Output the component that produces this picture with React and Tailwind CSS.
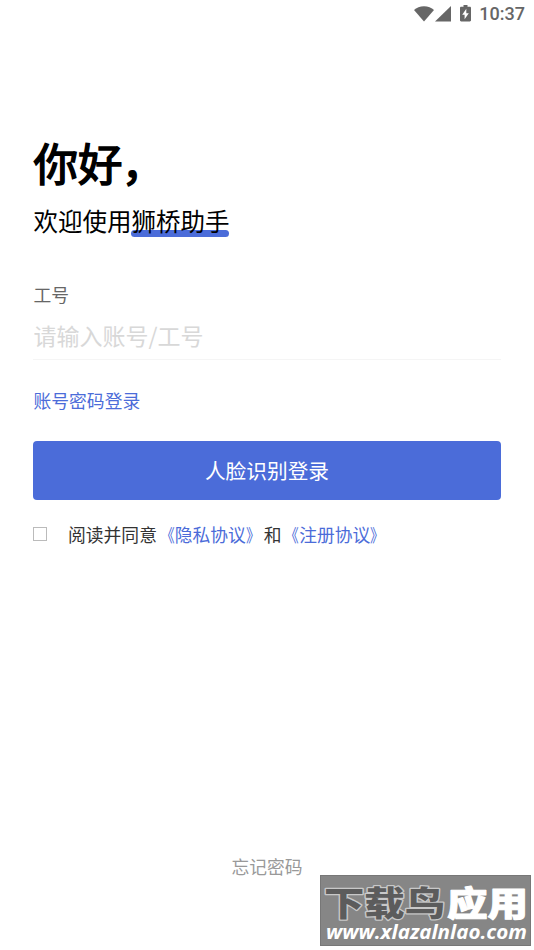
import React, { useState } from 'react';

const StatusBar = () => (
  <div className="flex h-[27px] items-center justify-end pr-[9px] text-[#666]">
    <svg className="mr-px" width="20" height="16" viewBox="0 0 20 16" fill="currentColor">
      <path d="M10 15.500 0 4.100C2.500 1.700 6 .3 10 .3s7.500 1.400 10 3.800z" />
    </svg>
    <svg className="mr-[9px]" width="16" height="16" viewBox="0 0 16 16" fill="currentColor">
      <path d="M16 0v15.500H0z" />
    </svg>
    <svg className="mr-2" width="11" height="17" viewBox="0 0 11 17">
      <path
        fill="currentColor"
        d="M3.500 0h4v1.800h2.300c.7 0 1.200.5 1.200 1.200v12.300c0 .7-.5 1.200-1.200 1.200H1.200C.5 16.500 0 16 0 15.300V3c0-.7.5-1.200 1.200-1.200h2.300z"
      />
      <path fill="#fff" d="M6.300 3.800 2.200 9.700h2.400v4.500L8.800 8.200H6.300z" />
    </svg>
    <span className="font-['Roboto',sans-serif] text-[18px] leading-none font-medium">10:37</span>
  </div>
);

const Agreement = ({ name }) => (
  <span className="flex text-[#4b6cd9]">
    <span className="origin-right scale-x-80">《</span>
    {name}
    <span className="origin-left scale-x-80">》</span>
  </span>
);

const Watermark = () => (
  <div className="absolute top-[875px] left-[320px] h-[71px] w-[211px] border border-[#777] bg-[#868686]">
    <svg className="block" width="209" height="69" viewBox="0 0 209 69">
      <g
        fontFamily="'Noto Sans CJK SC', sans-serif"
        fontSize="34"
        fontWeight="900"
        strokeLinejoin="round"
        style={{ paintOrder: 'stroke' }}
      >
        <text x="3" y="40" textLength="121" lengthAdjust="spacingAndGlyphs" fill="#5c5c5c" stroke="#c8c8c8" strokeWidth="2.500">
          下载鸟
        </text>
        <text x="126" y="40" textLength="81" lengthAdjust="spacingAndGlyphs" fill="#fff" stroke="#fff" strokeWidth="1">
          应用
        </text>
      </g>
      <text
        x="5"
        y="63"
        textLength="201"
        lengthAdjust="spacingAndGlyphs"
        fill="#fff"
        fontFamily="'Open Sans', sans-serif"
        fontSize="19"
        fontStyle="italic"
        fontWeight="700"
      >
        www.xlazalnlao.com
      </text>
    </svg>
  </div>
);

const App = () => {
  const [account, setAccount] = useState('');
  const [agreed, setAgreed] = useState(false);

  return (
    <div
      lang="zh-CN"
      className="relative flex h-[950px] w-[534px] flex-col overflow-hidden bg-white font-['Noto_Sans_CJK_SC',sans-serif]"
    >
      <StatusBar />

      <main className="flex flex-col items-start px-[33px] pt-[105px]">
        <h1 className="flex pl-[0.5px] text-[44.500px] leading-[60px] font-normal text-black [-webkit-text-stroke:1.500px_black]">
          你好<span className="-ml-px">，</span>
        </h1>
        <p className="mt-[11px] flex pl-[0.5px] text-[24.500px] leading-[36px] text-black">
          欢迎使用
          <span className="relative isolate">
            狮桥助手
            <span className="absolute right-[0.5px] -left-[0.5px] bottom-[2px] -z-10 h-[7px] rounded-full bg-[#4b6cd9]" />
          </span>
        </p>

        <label htmlFor="account" className="mt-[42px] pl-[0.5px] text-[17.800px] leading-[26px] text-[#666]">
          工号
        </label>
        <input
          id="account"
          className="mt-2.5 h-[43px] w-[468px] border-b border-[#f5f5f5] pb-[7px] pl-[0.5px] text-[23px] text-[#333] outline-none placeholder:text-[#d8d8d8]"
          placeholder="请输入账号/工号"
          value={account}
          onChange={(e) => setAccount(e.target.value)}
        />

        <button className="mt-[27px] pl-[0.5px] text-[17.800px] leading-[26px] text-[#4b6cd9]">账号密码登录</button>
        <button className="mt-[28px] h-[59px] w-[468px] rounded-[4px] bg-[#4b6cd9] text-[20.700px] text-white">
          人脸识别登录
        </button>

        <div className="mt-[21px] flex items-center text-[17.800px] leading-[26px] text-[#333]">
          <input
            type="checkbox"
            className="mr-[21px] h-3.5 w-3.5 appearance-none border border-[#bbb] checked:bg-[#4b6cd9]"
            checked={agreed}
            onChange={() => setAgreed(!agreed)}
          />
          <span>阅读并同意</span>
          <Agreement name="隐私协议" />
          <span>和</span>
          <Agreement name="注册协议" />
        </div>
      </main>

      <button className="mt-auto mb-[71px] self-center text-[17.800px] leading-[26px] text-[#999]">忘记密码</button>

      <Watermark />
    </div>
  );
};

export default App;
